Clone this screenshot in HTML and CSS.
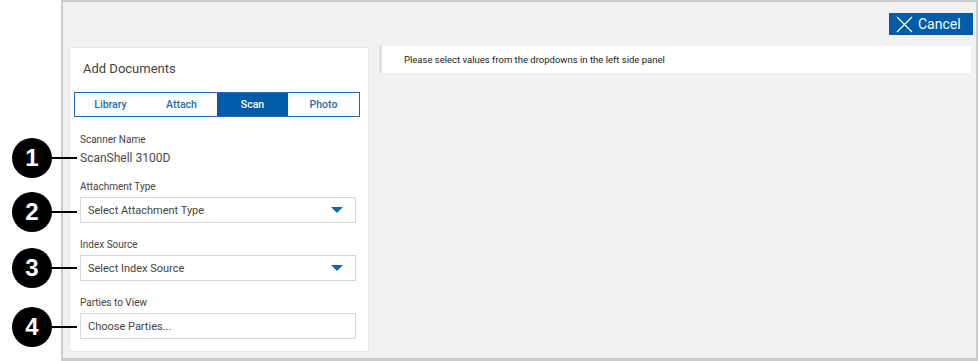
FILE: index.html
```html
<!DOCTYPE html>
<html>
<head>
<meta charset="utf-8">
<link rel="stylesheet" href="styles.css">
</head>
<body>
<div class="frame">
  <div class="toolbar">
    <button class="cancel">
      <svg width="17" height="17" viewBox="0 0 17 17"><path d="M1 1 L16 16 M16 1 L1 16" stroke="#fff" stroke-width="1.2" fill="none"/></svg>
      <span>Cancel</span>
    </button>
  </div>
  <div class="main">
    <div class="panel">
      <div class="title">Add Documents</div>
      <div class="tabs">
        <div class="tab">Library</div>
        <div class="tab">Attach</div>
        <div class="tab active">Scan</div>
        <div class="tab">Photo</div>
      </div>
      <div class="label first">Scanner Name</div>
      <div class="value">ScanShell 3100D</div>
      <div class="label">Attachment Type</div>
      <div class="control"><span>Select Attachment Type</span><span class="caret"></span></div>
      <div class="label">Index Source</div>
      <div class="control"><span>Select Index Source</span><span class="caret"></span></div>
      <div class="label">Parties to View</div>
      <div class="control"><span>Choose Parties...</span></div>
    </div>
    <div class="content">
      <div class="message">Please select values from the dropdowns in the left side panel</div>
    </div>
  </div>
</div>
<div class="callout c1"><span class="dot">1</span><span class="line"></span></div>
<div class="callout c2"><span class="dot">2</span><span class="line"></span></div>
<div class="callout c3"><span class="dot">3</span><span class="line"></span></div>
<div class="callout c4"><span class="dot">4</span><span class="line"></span></div>
</body>
</html>
```
FILE: styles.css
```css
* { box-sizing: border-box; }
html, body { margin: 0; padding: 0; background: #fff; }
body {
  font-family: Roboto, "Liberation Sans", Arial, sans-serif;
  width: 979px;
  height: 361px;
  position: relative;
  overflow: hidden;
}
.frame {
  margin-left: 61px;
  width: 917px;
  height: 361px;
  border: 2px solid #cbcbcb;
  border-bottom-width: 3px;
  background: #f1f1f1;
  display: flex;
  flex-direction: column;
}
.toolbar {
  display: flex;
  justify-content: flex-end;
  padding: 11px 3px 0 0;
  height: 44px;
}
.cancel {
  background: #005ca8;
  border: none;
  color: #fff;
  height: 22px;
  width: 84px;
  display: flex;
  align-items: center;
  gap: 5px;
  padding: 0 0 0 7px;
  font-family: Roboto, "Liberation Sans", Arial, sans-serif;
  font-size: 14px;
  cursor: pointer;
}
.cancel svg { display: block; }
.main {
  display: flex;
  align-items: flex-start;
  padding-left: 6px;
  gap: 10px;
}
.panel {
  width: 300px;
  background: #fff;
  border: 1px solid #e6e6e6;
  margin-top: 1px;
  padding: 13px 12px 11px 10px;
  height: 305px;
}
.title {
  font-size: 13px;
  line-height: 16px;
  color: #444;
  padding-left: 3px;
}
.tabs {
  margin: 15px 0 0 -6px;
  width: 286px;
  height: 25px;
  border: 1px solid #1d6db6;
  display: flex;
}
.tab {
  flex: 1;
  font-size: 10.5px;
  color: #1d6db6;
  display: flex;
  align-items: center;
  justify-content: center;
  font-weight: 500;
}
.tab.active { background: #005ca8; color: #fff; }
.label {
  font-size: 10px;
  line-height: 14px;
  color: #444;
  margin-top: 15px;
}
.label.first { margin-top: 16px; }
.value {
  font-size: 12px;
  line-height: 16px;
  color: #4a4a4a;
  margin-top: 3px;
  margin-bottom: -1px;
}
.control {
  margin-top: 3px;
  height: 26px;
  width: 276px;
  border: 1px solid #d9d9d9;
  display: flex;
  align-items: center;
  justify-content: space-between;
  padding: 0 12px 0 7px;
  font-size: 11px;
  color: #444;
}
.caret {
  width: 0; height: 0;
  border-left: 6px solid transparent;
  border-right: 6px solid transparent;
  border-top: 6px solid #1566b0;
}
.content { flex: 1; padding-right: 5px; }
.message {
  background: #fff;
  border-left: 3px solid #e0e0e0;
  height: 27px;
  display: flex;
  align-items: center;
  padding-left: 22px;
  font-size: 9.5px;
  color: #222;
}
.callout {
  position: absolute;
  left: 12px;
  display: flex;
  align-items: center;
}
.dot {
  width: 40px;
  height: 40px;
  border-radius: 50%;
  background: #000;
  color: #fff;
  font-family: "Liberation Sans", Arial, sans-serif;
  font-weight: bold;
  font-size: 24px;
  display: flex;
  align-items: center;
  justify-content: center;
}
.line { width: 25px; height: 2px; background: #000; }
.c1 { top: 138px; }
.c2 { top: 192px; }
.c3 { top: 248px; }
.c4 { top: 307px; }
```
